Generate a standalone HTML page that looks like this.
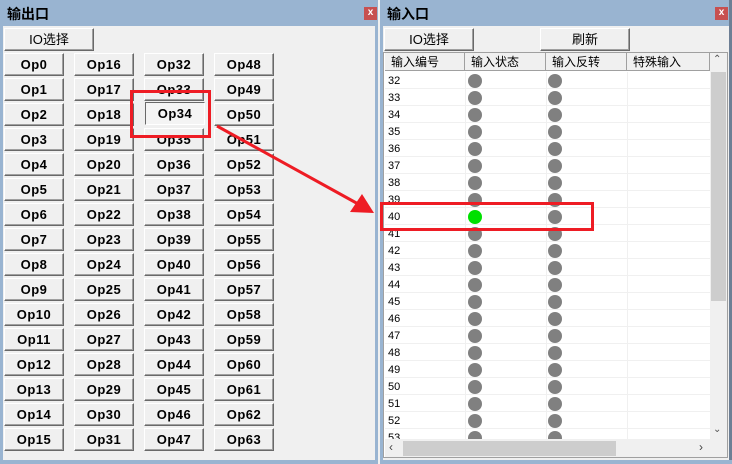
<!DOCTYPE html><html><head><meta charset="utf-8"><style>
*{margin:0;padding:0;box-sizing:border-box}
body{width:732px;height:464px;overflow:hidden;background:#f0f0f0;position:relative;font-family:"Liberation Sans","Noto Sans CJK SC",sans-serif}
.a{position:absolute}
.win{position:absolute;top:0;height:464px;background:#f0f0f0;border:3px solid #99b4d1;border-top:none}
.tb{position:absolute;left:0;top:0;right:0;height:26px;background:#99b4d1;font:bold 14px "Liberation Sans","Noto Sans CJK SC",sans-serif;color:#000;padding:4px 0 0 4px}
.x{position:absolute;top:7px;width:13px;height:13px;background:#c75050;color:#fff;font:bold 10px "Liberation Sans",sans-serif;text-align:center;line-height:12px}
.b{position:absolute;background:#f0f0f0;border:1px solid;border-color:#fff #696969 #696969 #fff;box-shadow:inset -1px -1px 0 #a0a0a0;font:bold 13px "Liberation Sans",sans-serif;letter-spacing:0.5px;text-align:center;line-height:21px;width:60px;height:23px}
.bn{font:13px "Liberation Sans","Noto Sans CJK SC",sans-serif;letter-spacing:0}
.row{position:absolute;left:385px;width:325px;height:17px;border-bottom:1px solid #f0f0f0;font:11px "Liberation Sans",sans-serif;color:#000}
.d{position:absolute;top:2px;width:14px;height:14px;border-radius:50%;background:#808080}
.hd{position:absolute;top:53px;height:18px;background:#f0f0f0;border-right:1px solid #a0a0a0;border-bottom:1px solid #a0a0a0;font:12px "Noto Sans CJK SC",sans-serif;padding-left:6px;line-height:17px}
</style></head><body>
<div class="win" style="left:0;width:378px"><div class="tb">输出口</div><div class="x" style="left:361px">x</div></div>
<div class="b bn" style="left:4px;top:28px;width:90px;height:23px">IO选择</div>
<div id="L"></div>
<div class="win" style="left:380px;width:352px;border-right-color:#6d7f95"><div class="tb">输入口</div><div class="x" style="left:332px">x</div></div>
<div class="b bn" style="left:384px;top:28px;width:90px">IO选择</div>
<div class="b bn" style="left:540px;top:28px;width:90px">刷新</div>
<div class="a" style="left:383px;top:52px;width:345px;height:406px;background:#fff;border:1px solid #a0a0a0"></div>
<div class="hd" style="left:385px;width:80px">输入编号</div>
<div class="hd" style="left:465px;width:81px">输入状态</div>
<div class="hd" style="left:546px;width:81px">输入反转</div>
<div class="hd" style="left:627px;width:83px">特殊输入</div>
<div id="R"></div>
<div class="a" style="left:710px;top:53px;width:17px;height:387px;background:#f0f0f0"></div>
<div class="a" style="left:711px;top:72px;width:15px;height:229px;background:#cdcdcd"></div>
<div class="a" style="left:713px;top:54px;font:10px sans-serif;color:#555">⌃</div>
<div class="a" style="left:713px;top:424px;font:10px sans-serif;color:#555">⌄</div>
<div class="a" style="left:385px;top:440px;width:342px;height:17px;background:#f0f0f0"></div>
<div class="a" style="left:403px;top:441px;width:213px;height:15px;background:#cdcdcd"></div>
<div class="a" style="left:389px;top:440px;font:12px sans-serif;color:#444">‹</div>
<div class="a" style="left:699px;top:440px;font:12px sans-serif;color:#444">›</div>
<div class="a" style="left:0;top:460px;width:378px;height:4px;background:#99b4d1"></div>
<div class="a" style="left:380px;top:460px;width:352px;height:4px;background:#99b4d1"></div>
<svg class="a" style="left:0;top:0" width="732" height="464">
<rect x="131.5" y="91.5" width="78" height="45" fill="none" stroke="#ee1c24" stroke-width="3"/>
<rect x="381.5" y="203.5" width="211" height="26" fill="none" stroke="#ee1c24" stroke-width="3"/>
<line x1="217" y1="126" x2="360" y2="205" stroke="#ee1c24" stroke-width="3"/>
<polygon points="374,213 350,212 362,194" fill="#ee1c24"/>
</svg>
<script>
var L='';for(var c=0;c<4;c++)for(var r=0;r<16;r++){var n=c*16+r;var x=4+70*c,y=53+25*r;
L+='<div class="b" style="left:'+x+'px;top:'+y+'px'+(n==34?';left:'+(x+1)+'px;top:'+(y-1)+'px;border-color:#696969 #fff #fff #696969;box-shadow:none;background:#f4f4f4':'')+'">Op'+n+'</div>';}
document.getElementById('L').innerHTML=L;
var R='';for(var i=0;i<22;i++){var y=72+17*i;var h=y+17>440?440-y:17;
R+='<div class="row" style="top:'+y+'px;height:'+h+'px;overflow:hidden"><span style="position:absolute;left:3px;top:3px">'+(32+i)+'</span><div style="position:absolute;left:80px;top:0;height:17px;border-left:1px solid #f0f0f0"></div><div style="position:absolute;left:161px;top:0;height:17px;border-left:1px solid #f0f0f0"></div><div style="position:absolute;left:242px;top:0;height:17px;border-left:1px solid #f0f0f0"></div><div class="d" style="left:83px;'+(i==8?'background:#00e000':'')+'"></div><div class="d" style="left:163px"></div></div>';}
document.getElementById('R').innerHTML=R;
</script>
</body></html>
